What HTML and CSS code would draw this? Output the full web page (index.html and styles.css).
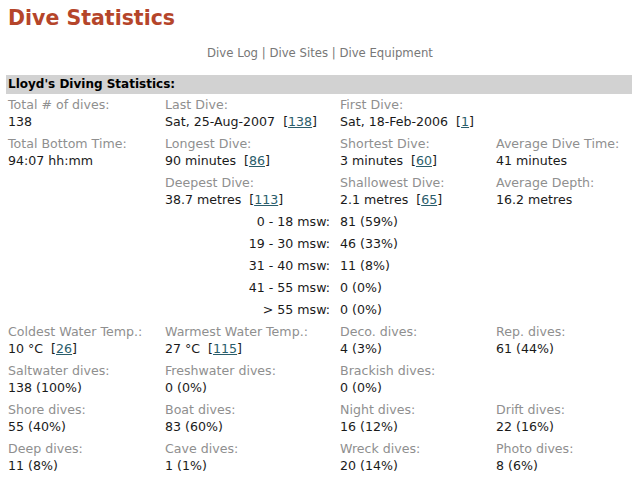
FILE: index.html
```html
<!DOCTYPE html>
<html>
<head>
<meta charset="utf-8">
<link rel="stylesheet" href="styles.css">
</head>
<body>
<h1 class="title">Dive Statistics</h1>
<nav class="nav"><a>Dive Log</a> | <a>Dive Sites</a> | <a>Dive Equipment</a></nav>
<div class="bar">Lloyd's Diving Statistics:</div>
<div class="grid">
  <div class="cell"><div class="lbl">Total # of dives:</div><div class="val">138</div></div>
  <div class="cell"><div class="lbl">Last Dive:</div><div class="val">Sat, 25-Aug-2007&nbsp; [<a class="ln">138</a>]</div></div>
  <div class="cell"><div class="lbl">First Dive:</div><div class="val">Sat, 18-Feb-2006&nbsp; [<a class="ln">1</a>]</div></div>
  <div class="cell"></div>

  <div class="cell"><div class="lbl">Total Bottom Time:</div><div class="val">94:07 hh:mm</div></div>
  <div class="cell"><div class="lbl">Longest Dive:</div><div class="val">90 minutes&nbsp; [<a class="ln">86</a>]</div></div>
  <div class="cell"><div class="lbl">Shortest Dive:</div><div class="val">3 minutes&nbsp; [<a class="ln">60</a>]</div></div>
  <div class="cell"><div class="lbl">Average Dive Time:</div><div class="val">41 minutes</div></div>

  <div class="cell"></div>
  <div class="cell"><div class="lbl">Deepest Dive:</div><div class="val">38.7 metres&nbsp; [<a class="ln">113</a>]</div></div>
  <div class="cell"><div class="lbl">Shallowest Dive:</div><div class="val">2.1 metres&nbsp; [<a class="ln">65</a>]</div></div>
  <div class="cell"><div class="lbl">Average Depth:</div><div class="val">16.2 metres</div></div>
</div>
<div class="depths">
  <div class="dl">0 - 18 msw:</div><div class="dv">81 (59%)</div>
  <div class="dl">19 - 30 msw:</div><div class="dv">46 (33%)</div>
  <div class="dl">31 - 40 msw:</div><div class="dv">11 (8%)</div>
  <div class="dl">41 - 55 msw:</div><div class="dv">0 (0%)</div>
  <div class="dl">&gt; 55 msw:</div><div class="dv">0 (0%)</div>
</div>
<div class="grid grid2">
  <div class="cell"><div class="lbl">Coldest Water Temp.:</div><div class="val">10 °C&nbsp; [<a class="ln">26</a>]</div></div>
  <div class="cell"><div class="lbl">Warmest Water Temp.:</div><div class="val">27 °C&nbsp; [<a class="ln">115</a>]</div></div>
  <div class="cell"><div class="lbl">Deco. dives:</div><div class="val">4 (3%)</div></div>
  <div class="cell"><div class="lbl">Rep. dives:</div><div class="val">61 (44%)</div></div>

  <div class="cell"><div class="lbl">Saltwater dives:</div><div class="val">138 (100%)</div></div>
  <div class="cell"><div class="lbl">Freshwater dives:</div><div class="val">0 (0%)</div></div>
  <div class="cell"><div class="lbl">Brackish dives:</div><div class="val">0 (0%)</div></div>
  <div class="cell"></div>

  <div class="cell"><div class="lbl">Shore dives:</div><div class="val">55 (40%)</div></div>
  <div class="cell"><div class="lbl">Boat dives:</div><div class="val">83 (60%)</div></div>
  <div class="cell"><div class="lbl">Night dives:</div><div class="val">16 (12%)</div></div>
  <div class="cell"><div class="lbl">Drift dives:</div><div class="val">22 (16%)</div></div>

  <div class="cell"><div class="lbl">Deep dives:</div><div class="val">11 (8%)</div></div>
  <div class="cell"><div class="lbl">Cave dives:</div><div class="val">1 (1%)</div></div>
  <div class="cell"><div class="lbl">Wreck dives:</div><div class="val">20 (14%)</div></div>
  <div class="cell"><div class="lbl">Photo dives:</div><div class="val">8 (6%)</div></div>
</div>
</body>
</html>
```
FILE: styles.css
```css
html, body {
  margin: 0;
  padding: 0;
  background: #ffffff;
}
body {
  font-family: "DejaVu Sans", Verdana, sans-serif;
  font-size: 12.6px;
  color: #1a1a1a;
  width: 640px;
  overflow: hidden;
}
.title {
  margin: 0;
  padding: 5px 0 0 8px;
  height: 31px;
  font-size: 20.5px;
  line-height: 26px;
  font-weight: bold;
  color: #b5452a;
}
.nav {
  text-align: center;
  color: #777;
  height: 18px;
  line-height: 18px;
  margin-top: 8px;
  font-size: 11.7px;
}
.nav a {
  color: #777;
}
.bar {
  margin: 13px 8px 0 6px;
  background: #d2d2d2;
  height: 19px;
  line-height: 19px;
  padding-left: 2px;
  font-weight: bold;
  font-size: 12px;
  color: #000;
}
.grid {
  display: grid;
  grid-template-columns: 157px 175px 156px 1fr;
  padding-left: 8px;
  row-gap: 5px;
  margin-top: 2px;
}
.grid2 {
  margin-top: 2px;
}
.lbl {
  color: #8f8f8f;
  line-height: 17px;
}
.val {
  color: #1a1a1a;
  line-height: 17px;
}
.ln {
  color: #2a5d6b;
  text-decoration: underline;
}
.depths {
  display: grid;
  grid-template-columns: 340px 1fr;
  margin-top: 3px;
}
.dl {
  text-align: right;
  padding-right: 10px;
  line-height: 22px;
}
.dv {
  line-height: 22px;
}
```
